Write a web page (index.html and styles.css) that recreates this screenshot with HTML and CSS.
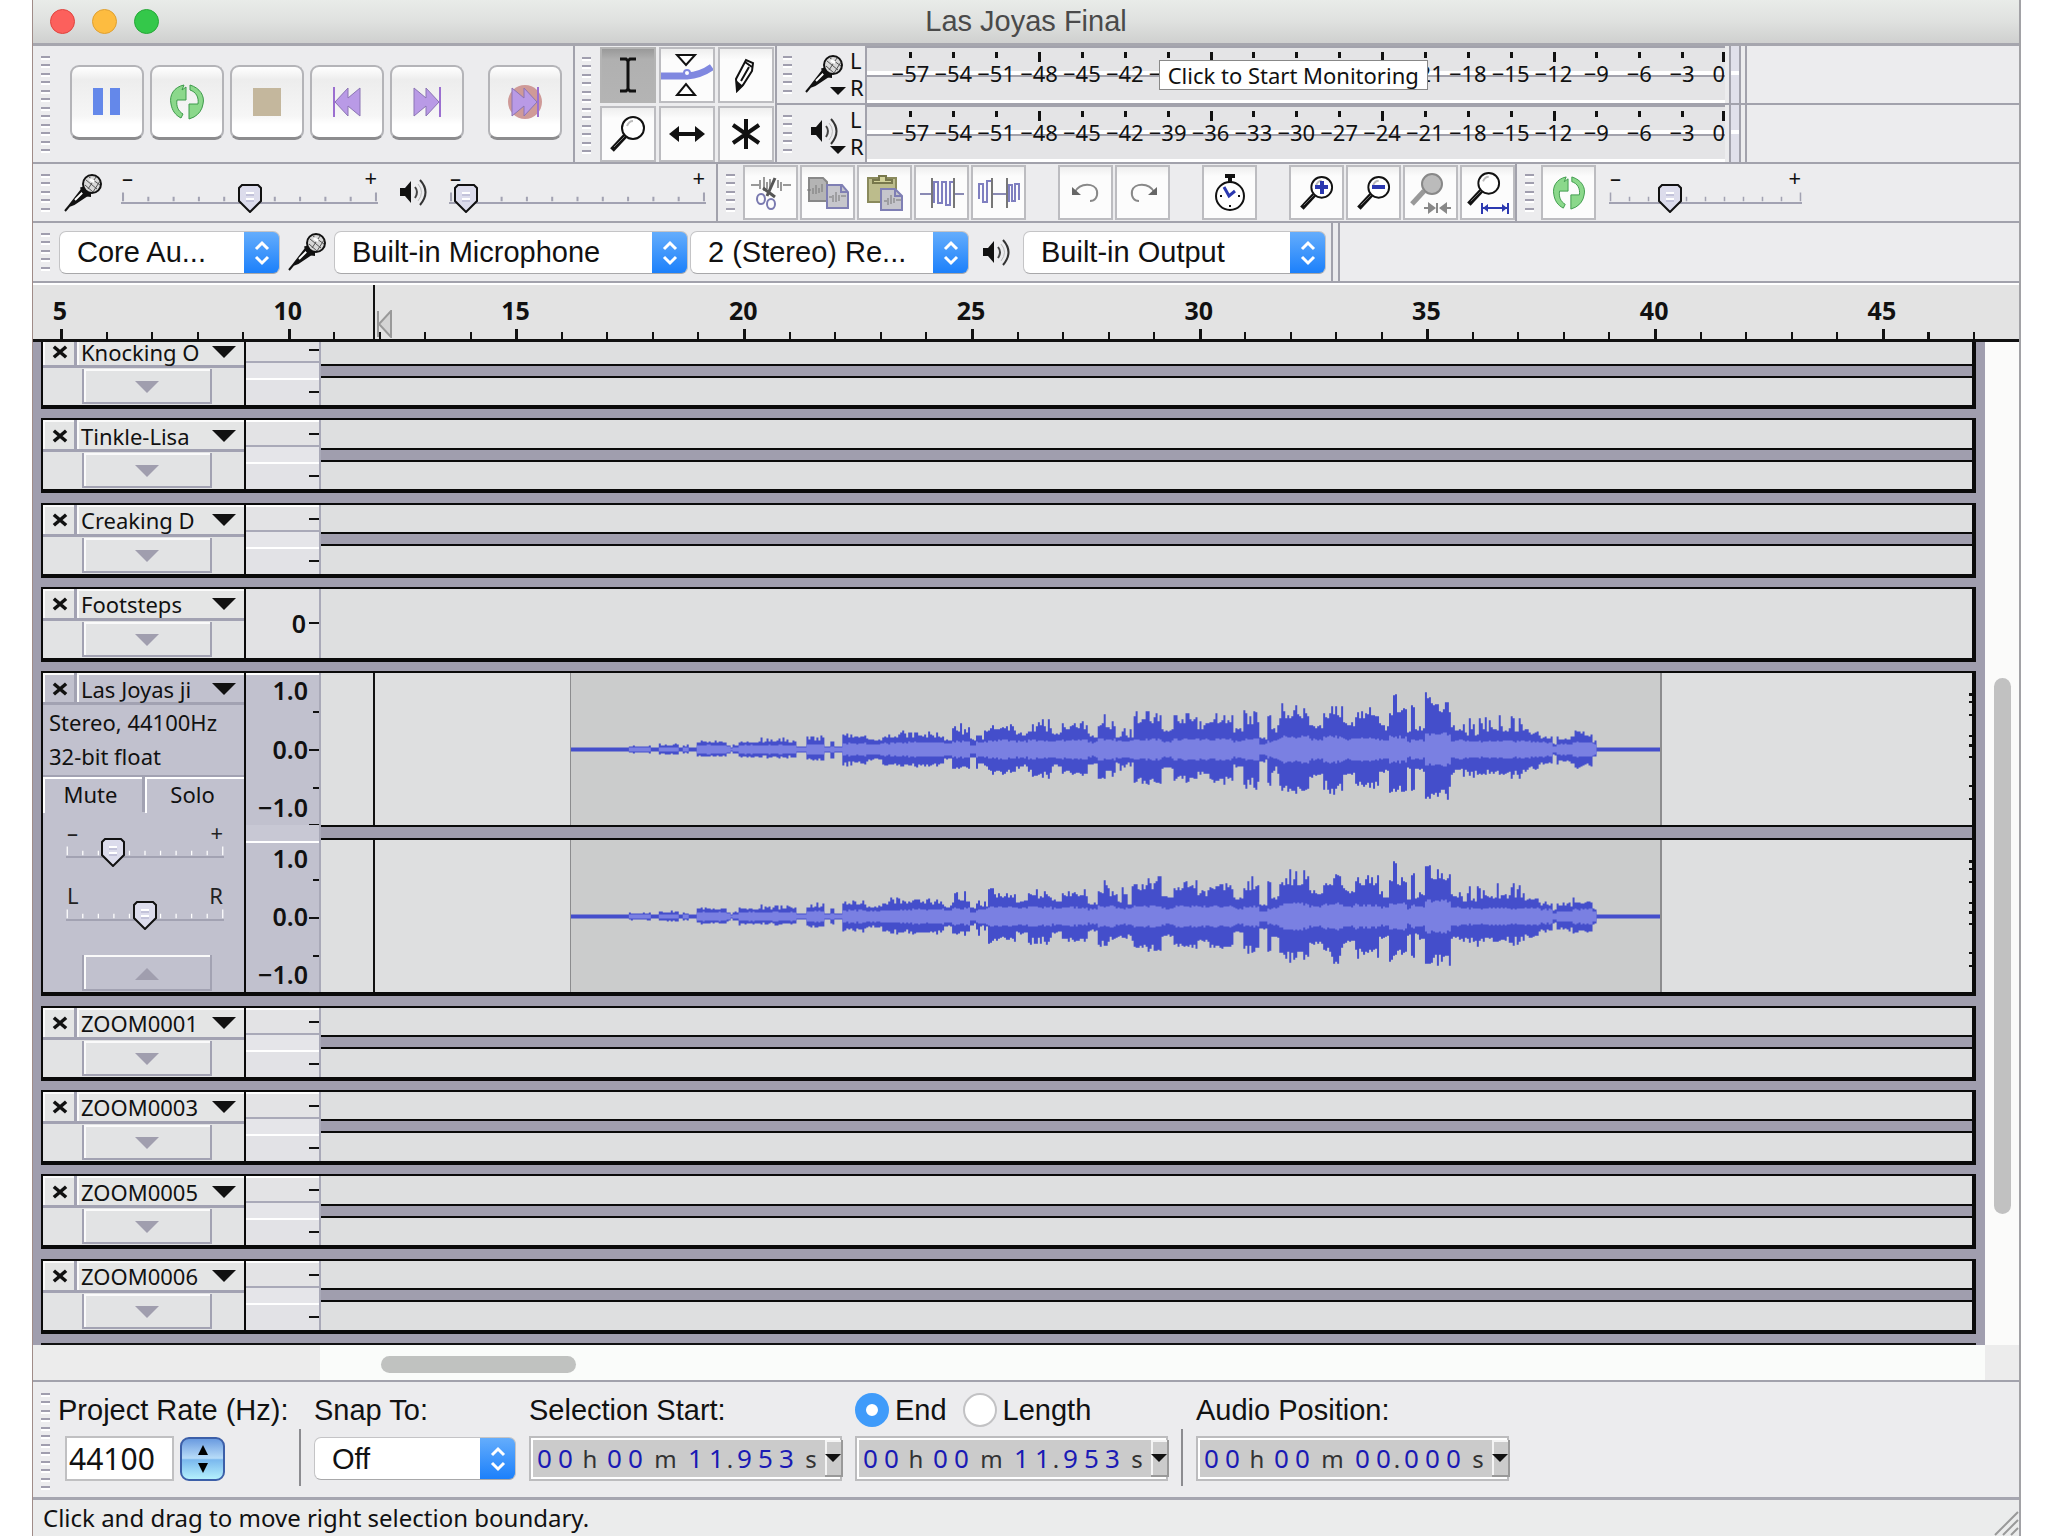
FILE: index.html
```html
<!DOCTYPE html>
<html lang="en">
<head>
<meta charset="utf-8">
<title>Las Joyas Final</title>
<link rel="stylesheet" href="styles.css">
</head>
<body>
<svg class="sprite" aria-hidden="true">
  <symbol id="mic" viewBox="0 0 40 40">
    <path d="M2 38 7 32M6 33 20 15l6 6L11 31Z" fill="#111" stroke="#111" stroke-width="2"/>
    <path d="M12 27 21 18" stroke="#fff" stroke-width="2"/>
    <path d="M19 14c1 5 4 8 9 8" stroke="#111" stroke-width="4" fill="none"/>
    <circle cx="29" cy="11" r="9" fill="#d8d8d8" stroke="#111" stroke-width="2"/>
    <path d="M23 7l11 9M26 4l11 8M22 12l8 7M25 16l8-12M30 19l7-11" stroke="#555" fill="none"/>
    <path d="M27 6l4 3" stroke="#fff" stroke-width="3"/>
  </symbol>
  <symbol id="speaker" viewBox="0 0 27 28">
    <path d="M0 10h5l6-7v22l-6-7H0Z" fill="#111"/>
    <path d="M15 9q4 5 0 11" fill="none" stroke="#444" stroke-width="2"/>
    <path d="M20 2q11 12 0 25" fill="none" stroke="#333" stroke-width="2"/>
    <path d="M18 6q7 8 0 17" fill="none" stroke="#bbb" stroke-width="1"/>
  </symbol>
  <symbol id="loop" viewBox="0 0 36 36">
    <path d="M15 1C5 3 0 11 2 20c1 6 4 11 10 14l2-4C9 27 7 22 8 16h9V3l-4 3Z" fill="#8bd88b" stroke="#3d9a4a" stroke-width="1"/>
    <path d="M21 1c10 3 15 11 13 19-1 6-4 10-9 13l-5 2V20h9c1-7-2-12-8-14Z" fill="#8bd88b" stroke="#3d9a4a" stroke-width="1"/>
  </symbol>
  <symbol id="skip" viewBox="0 0 28 34">
    <path d="M1 3 13 13V3l13 14-13 14V21L1 31Z" fill="#b99ae6" stroke="#8b74b4" stroke-width="1"/>
    <path d="M27 2v30" stroke="#9b6fd0" stroke-width="2"/>
  </symbol>
  <symbol id="lens" viewBox="0 0 36 36">
    <path d="M2 34 15 20" stroke="#111" stroke-width="5"/>
    <path d="M4 31 15 20" stroke="#777" stroke-width="1"/>
    <circle cx="23" cy="12" r="11" fill="#fff" stroke="#111" stroke-width="2"/>
    <path d="M17 10q2-5 6-5" stroke="#bbb" stroke-width="2" fill="none"/>
  </symbol>
  <symbol id="chevrons" viewBox="0 0 16 26">
    <path d="M2 9 8 3l6 6M2 17l6 6 6-6" fill="none" stroke="#fff" stroke-width="3"/>
  </symbol>
  <symbol id="down" viewBox="0 0 24 12"><path d="M0 0h24L12 12Z" fill="currentColor"/></symbol>
  <symbol id="up" viewBox="0 0 24 12"><path d="M0 12h24L12 0Z" fill="currentColor"/></symbol>
  <symbol id="cross" viewBox="0 0 16 16"><path d="M1 2 15 14M15 2 1 14" stroke="#111" stroke-width="4"/></symbol>
  <symbol id="scale" viewBox="0 0 254 16" preserveAspectRatio="none">
    <path d="M2 5v10M252 5v10M27 10v5M52 10v5M77 10v5M102 10v5M127 10v5M152 10v5M177 10v5M202 10v5M227 10v5" stroke="currentColor" stroke-width="2"/>
  </symbol>
</svg>

<main class="window">
  <header class="titlebar">
    <div class="lights"><button class="red" aria-label="Close"></button><button class="amber" aria-label="Minimise"></button><button class="green" aria-label="Zoom"></button></div>
    <h1>Las Joyas Final</h1>
  </header>

  <div class="row row-transport">
    <div class="bar transport">
      <div class="grip tall"></div>
      <div class="transport-buttons">
        <button aria-label="Pause"><svg width="30" height="30"><path d="M1 1h10v27H1ZM18 1h10v27H18Z" fill="#6488ea"/></svg></button>
        <button aria-label="Play"><svg width="36" height="36"><use href="#loop"/></svg></button>
        <button aria-label="Stop"><svg width="28" height="28"><path d="M0 0h28v28H0Z" fill="#c4b79d"/></svg></button>
        <button aria-label="Skip to Start"><svg class="flip" width="28" height="34"><use href="#skip"/></svg></button>
        <button aria-label="Skip to End"><svg width="28" height="34"><use href="#skip"/></svg></button>
        <button class="record" aria-label="Record"><svg width="36" height="36"><circle cx="18" cy="18" r="17" fill="#cf9a98"/><use href="#skip" x="4" y="1" width="28" height="34"/></svg></button>
      </div>
    </div>
    <div class="bar tools">
      <div class="grip tall"></div>
      <div class="tool-grid">
        <button class="on" aria-label="Selection"><svg width="20" height="36"><path d="M2 2h6l2 2 2-2h6M10 3v30M2 34h6l2-2 2 2h6" fill="none" stroke="#111" stroke-width="3"/></svg></button>
        <button aria-label="Envelope"><svg width="52" height="44"><path d="M0 23h26q14-1 25-9" fill="none" stroke="#8088e0" stroke-width="7"/><path d="M16 2h18L25 12ZM16 42h18L25 31Z" fill="#fff" stroke="#111" stroke-width="2"/><circle cx="26" cy="20" r="3" fill="#fff" stroke="#8088e0" stroke-width="2"/></svg></button>
        <button aria-label="Draw"><svg width="24" height="36"><path d="M3 34 2 22 12 3l7 3-1 8-9 14Z" fill="#fff" stroke="#111" stroke-width="2"/><path d="M3 34 2 23l7 6Z" fill="#111"/><path d="M11 5l7 5M7 24l8-14" stroke="#111" stroke-width="2"/></svg></button>
        <button aria-label="Zoom"><svg width="36" height="36"><use href="#lens"/></svg></button>
        <button aria-label="Time Shift"><svg width="36" height="20"><path d="M0 10 10 2v6h16V2l10 8-10 8v-6H10v6Z" fill="#111"/></svg></button>
        <button aria-label="Multi-Tool"><svg width="30" height="32"><path d="M15 1v30M2 7l26 18M28 7 2 25" stroke="#111" stroke-width="4"/></svg></button>
      </div>
    </div>
    <div class="meters">
      <div class="meter">
        <div class="grip"></div>
        <button class="meter-menu" aria-label="Recording meter"><svg width="40" height="40"><use href="#mic"/></svg><svg class="caret" width="16" height="8"><use href="#down"/></svg></button>
        <div class="lr"><span>L</span><span>R</span></div>
        <div class="meter-scale"><span>−57</span><span>−54</span><span>−51</span><span>−48</span><span>−45</span><span>−42</span><span>−39</span><span></span><span></span><span></span><span></span><span></span><span>−21</span><span>−18</span><span>−15</span><span>−12</span><span>−9</span><span>−6</span><span>−3</span><span>0</span>
          <div class="tip">Click to Start Monitoring</div></div>
        <div class="peak"></div><div class="meter-end"></div>
      </div>
      <div class="meter">
        <div class="grip"></div>
        <button class="meter-menu" aria-label="Playback meter"><svg width="27" height="28"><use href="#speaker"/></svg><svg class="caret" width="16" height="8"><use href="#down"/></svg></button>
        <div class="lr"><span>L</span><span>R</span></div>
        <div class="meter-scale"><span>−57</span><span>−54</span><span>−51</span><span>−48</span><span>−45</span><span>−42</span><span>−39</span><span>−36</span><span>−33</span><span>−30</span><span>−27</span><span>−24</span><span>−21</span><span>−18</span><span>−15</span><span>−12</span><span>−9</span><span>−6</span><span>−3</span><span>0</span></div>
        <div class="peak"></div><div class="meter-end"></div>
      </div>
    </div>
  </div>

  <div class="row row-mixer">
    <div class="bar mixer">
      <div class="grip"></div>
      <svg class="mixer-mic" width="40" height="40"><use href="#mic"/></svg>
      <div class="slider"><div class="ends"><span>–</span><span>+</span></div><svg class="scale"><use href="#scale" width="100%" height="100%"/></svg><input type="range" aria-label="Recording volume" value="50"></div>
      <svg width="27" height="28"><use href="#speaker"/></svg>
      <div class="slider"><div class="ends"><span>–</span><span>+</span></div><svg class="scale"><use href="#scale" width="100%" height="100%"/></svg><input type="range" aria-label="Playback volume" value="6"></div>
    </div>
    <div class="bar edit">
      <div class="grip"></div>
      <div class="edit-buttons">
        <button aria-label="Cut"><svg width="42" height="34"><path d="M1 9h8M33 9h8M10 4v9M14 1v14M17 6v7M20 3v10M28 4v8M31 6v9" stroke="#999" stroke-width="2"/><path d="M25 2 17 20M13 12l12 9" stroke="#555" stroke-width="3"/><ellipse cx="11" cy="23" rx="4" ry="5" fill="none" stroke="#7a7ab0" stroke-width="2"/><ellipse cx="21" cy="28" rx="4" ry="5" fill="none" stroke="#7a7ab0" stroke-width="2"/></svg></button>
        <button aria-label="Copy"><svg width="44" height="34"><path d="M3 2h14l4 4v19H3Z" fill="#b4b4b4" stroke="#888" stroke-width="2"/><path d="M1 14h4M7 12v6M10 9v9M13 12v5M16 8v8" stroke="#777" stroke-width="1"/><path d="M21 9h15l6 7v16H21Z" fill="#c6c6cc" stroke="#7f7fb4" stroke-width="2"/><path d="M35 9v7h7" fill="none" stroke="#7f7fb4" stroke-width="2"/><path d="M23 21h3M27 19v7M30 16v10M33 19v6M35 20h5" stroke="#777"/></svg></button>
        <button aria-label="Paste"><svg width="38" height="38"><path d="M2 4h28v24H2Z" fill="#bcbc8c" stroke="#8a8a5c" stroke-width="2"/><path d="M7 9v-3h6V2h7v4h6v3Z" fill="#d2d29a" stroke="#77774c" stroke-width="2"/><path d="M15 15h14l7 7v14H15Z" fill="#c6c6cc" stroke="#7f7fb4" stroke-width="2"/><path d="M29 15v7h7" fill="none" stroke="#7f7fb4" stroke-width="2"/><path d="M18 27h3M22 24v7M25 21v9M28 24v5M30 26h5" stroke="#777"/></svg></button>
        <button aria-label="Trim"><svg width="44" height="32"><path d="M0 17h12M34 17h10" stroke="#8a8ab4" stroke-width="2"/><path d="M12 1v30M34 1v30" stroke="#777" stroke-width="2"/><path d="M14 26V5h4v21h4V5h4v23h4V5h3" fill="none" stroke="#7f7fc0" stroke-width="2"/></svg></button>
        <button aria-label="Silence"><svg width="44" height="32"><path d="M16 17h15" stroke="#8a8ab4" stroke-width="2"/><path d="M15 1v30M30 1v30" stroke="#777" stroke-width="2"/><path d="M2 22V7h4v18h4V4h4M32 25V8h3v16h3V7h4v16" fill="none" stroke="#7f7fc0" stroke-width="2"/></svg></button>
        <button class="gap" aria-label="Undo"><svg width="30" height="22"><path d="M4 10C9 0 24 1 26 9c1 6-2 10-7 10" fill="none" stroke="#888" stroke-width="2"/><path d="M1 5v8h9Z" fill="#666"/></svg></button>
        <button aria-label="Redo"><svg class="flip" width="30" height="22"><path d="M4 10C9 0 24 1 26 9c1 6-2 10-7 10" fill="none" stroke="#888" stroke-width="2"/><path d="M1 5v8h9Z" fill="#666"/></svg></button>
        <button class="gap" aria-label="Sync-Lock"><svg width="32" height="38"><circle cx="16" cy="22" r="14" fill="#fff" stroke="#111" stroke-width="2"/><path d="M11 2h10M16 2v6" stroke="#111" stroke-width="4"/><path d="M10 13l5 9 6-5" fill="none" stroke="#2b38b0" stroke-width="3"/><path d="M6 22h2M24 22h2M16 31v2" stroke="#111" stroke-width="2"/></svg></button>
        <button class="gap" aria-label="Zoom In"><svg width="34" height="34"><use href="#lens"/><path d="M22 5v13M15 11h13" stroke="#2b38b0" stroke-width="4"/></svg></button>
        <button aria-label="Zoom Out"><svg width="34" height="34"><use href="#lens"/><path d="M15 11h13" stroke="#2b38b0" stroke-width="4"/></svg></button>
        <button aria-label="Fit Selection"><svg width="42" height="42"><path d="M2 32 14 19" stroke="#999" stroke-width="5"/><circle cx="22" cy="12" r="10" fill="#bbb" stroke="#888" stroke-width="2"/><path d="M14 36h8M32 36h9M27 31v10" stroke="#888" stroke-width="2"/><path d="M18 30l8 6-8 6ZM37 30l-8 6 8 6Z" fill="#888"/></svg></button>
        <button aria-label="Fit Project"><svg width="42" height="42"><use href="#lens" width="34" height="34"/><path d="M15 31v11M41 31v11M15 36h26" stroke="#2b38b0" stroke-width="2"/><path d="M16 36l5-4v8ZM40 36l-5-4v8Z" fill="#2b38b0"/></svg></button>
      </div>
    </div>
    <div class="bar speed">
      <div class="grip"></div>
      <button class="flat" aria-label="Play at Speed"><svg width="34" height="36"><use href="#loop"/></svg></button>
      <div class="slider"><div class="ends"><span>–</span><span>+</span></div><svg class="scale"><use href="#scale" width="100%" height="100%"/></svg><input type="range" aria-label="Playback speed" value="31"></div>
    </div>
  </div>

  <div class="row row-device">
    <div class="bar device">
      <div class="grip"></div>
      <div class="pick host"><select aria-label="Audio host"><option>Core Au...</option></select><svg width="16" height="26"><use href="#chevrons"/></svg></div>
      <svg width="40" height="40"><use href="#mic"/></svg>
      <div class="pick input-device"><select aria-label="Recording device"><option>Built-in Microphone</option></select><svg width="16" height="26"><use href="#chevrons"/></svg></div>
      <div class="pick channels"><select aria-label="Recording channels"><option>2 (Stereo) Re...</option></select><svg width="16" height="26"><use href="#chevrons"/></svg></div>
      <svg class="device-speaker" width="27" height="28"><use href="#speaker"/></svg>
      <div class="pick output-device"><select aria-label="Playback device"><option>Built-in Output</option></select><svg width="16" height="26"><use href="#chevrons"/></svg></div>
    </div>
    <div class="bar-end"></div>
  </div>

  <div class="ruler">
    <div class="seg"><span>5</span></div><div class="seg"><span>10</span></div><div class="seg"><span>15</span></div><div class="seg"><span>20</span></div><div class="seg"><span>25</span></div><div class="seg"><span>30</span></div><div class="seg"><span>35</span></div><div class="seg"><span>40</span></div><div class="seg short"><span>45</span></div>
    <div class="cursor"></div>
    <svg class="marker" width="16" height="28"><path d="M1 1v26M14 1v26L2 14Z" fill="#d4d4d4" stroke="#999" stroke-width="2"/></svg>
  </div>

  <div class="stage">
    <div class="tracks">
      <section class="track">
        <div class="panel"><div class="head"><button class="close" aria-label="Close track"><svg width="16" height="14"><use href="#cross"/></svg></button><button class="name">Knocking O<svg width="24" height="12"><use href="#down"/></svg></button></div><div class="fold"><button aria-label="Expand"><svg width="24" height="12"><use href="#down"/></svg></button></div></div>
        <div class="vs double"></div><div class="lanes"><div></div><div></div></div>
      </section>
      <section class="track">
        <div class="panel"><div class="head"><button class="close" aria-label="Close track"><svg width="16" height="14"><use href="#cross"/></svg></button><button class="name">Tinkle-Lisa<svg width="24" height="12"><use href="#down"/></svg></button></div><div class="fold"><button aria-label="Expand"><svg width="24" height="12"><use href="#down"/></svg></button></div></div>
        <div class="vs double"></div><div class="lanes"><div></div><div></div></div>
      </section>
      <section class="track">
        <div class="panel"><div class="head"><button class="close" aria-label="Close track"><svg width="16" height="14"><use href="#cross"/></svg></button><button class="name">Creaking D<svg width="24" height="12"><use href="#down"/></svg></button></div><div class="fold"><button aria-label="Expand"><svg width="24" height="12"><use href="#down"/></svg></button></div></div>
        <div class="vs double"></div><div class="lanes"><div></div><div></div></div>
      </section>
      <section class="track">
        <div class="panel"><div class="head"><button class="close" aria-label="Close track"><svg width="16" height="14"><use href="#cross"/></svg></button><button class="name">Footsteps<svg width="24" height="12"><use href="#down"/></svg></button></div><div class="fold"><button aria-label="Expand"><svg width="24" height="12"><use href="#down"/></svg></button></div></div>
        <div class="vs mono"><span>0</span></div><div class="lanes"><div></div></div>
      </section>
      <section class="track open">
        <div class="panel">
          <div class="head"><button class="close" aria-label="Close track"><svg width="16" height="14"><use href="#cross"/></svg></button><button class="name">Las Joyas ji<svg width="24" height="12"><use href="#down"/></svg></button></div>
          <div class="format"><span>Stereo, 44100Hz</span><span>32-bit float</span></div>
          <div class="mute-solo"><button>Mute</button><button>Solo</button></div>
          <div class="track-sliders">
            <div class="slider"><div class="ends"><span>–</span><span>+</span></div><svg class="scale"><use href="#scale" width="100%" height="100%"/></svg><input type="range" aria-label="Gain" value="29"></div>
            <div class="slider"><div class="ends"><span>L</span><span>R</span></div><svg class="scale"><use href="#scale" width="100%" height="100%"/></svg><input type="range" aria-label="Pan" value="50"></div>
          </div>
          <div class="fold"><button aria-label="Collapse"><svg width="24" height="12"><use href="#up"/></svg></button></div>
        </div>
        <div class="vs full">
          <div class="amps"><span>1.0</span><span>0.0</span><span>−1.0</span></div>
          <div class="amps"><span>1.0</span><span>0.0</span><span>−1.0</span></div>
        </div>
        <div class="lanes">
          <div class="lane"><div class="before"></div><div class="clip"><svg class="wave" viewBox="0 0 1091 151" preserveAspectRatio="none" data-seed="7"></svg></div><div class="after"></div></div>
          <div class="lane"><div class="before"></div><div class="clip"><svg class="wave" viewBox="0 0 1091 151" preserveAspectRatio="none" data-seed="23"></svg></div><div class="after"></div></div>
        </div>
      </section>
      <section class="track">
        <div class="panel"><div class="head"><button class="close" aria-label="Close track"><svg width="16" height="14"><use href="#cross"/></svg></button><button class="name">ZOOM0001<svg width="24" height="12"><use href="#down"/></svg></button></div><div class="fold"><button aria-label="Expand"><svg width="24" height="12"><use href="#down"/></svg></button></div></div>
        <div class="vs double"></div><div class="lanes"><div></div><div></div></div>
      </section>
      <section class="track">
        <div class="panel"><div class="head"><button class="close" aria-label="Close track"><svg width="16" height="14"><use href="#cross"/></svg></button><button class="name">ZOOM0003<svg width="24" height="12"><use href="#down"/></svg></button></div><div class="fold"><button aria-label="Expand"><svg width="24" height="12"><use href="#down"/></svg></button></div></div>
        <div class="vs double"></div><div class="lanes"><div></div><div></div></div>
      </section>
      <section class="track">
        <div class="panel"><div class="head"><button class="close" aria-label="Close track"><svg width="16" height="14"><use href="#cross"/></svg></button><button class="name">ZOOM0005<svg width="24" height="12"><use href="#down"/></svg></button></div><div class="fold"><button aria-label="Expand"><svg width="24" height="12"><use href="#down"/></svg></button></div></div>
        <div class="vs double"></div><div class="lanes"><div></div><div></div></div>
      </section>
      <section class="track">
        <div class="panel"><div class="head"><button class="close" aria-label="Close track"><svg width="16" height="14"><use href="#cross"/></svg></button><button class="name">ZOOM0006<svg width="24" height="12"><use href="#down"/></svg></button></div><div class="fold"><button aria-label="Expand"><svg width="24" height="12"><use href="#down"/></svg></button></div></div>
        <div class="vs double"></div><div class="lanes"><div></div><div></div></div>
      </section>
      <div class="next-track"></div>
    </div>
    <div class="vscroll"><div class="vthumb"></div></div>
  </div>
  <div class="hscroll"><div class="htrack"><div class="hthumb"></div></div></div>

  <div class="selection">
    <div class="grip tall"></div>
    <div class="field rate">
      <label for="rate">Project Rate (Hz):</label>
      <div class="controls"><input id="rate" type="text" value="44100"><button class="stepper" aria-label="Choose rate"><svg width="10" height="10"><path d="M0 10h10L5 0Z"/></svg><svg width="10" height="10"><path d="M0 0h10L5 10Z"/></svg></button></div>
    </div>
    <div class="rule"></div>
    <div class="field snap">
      <label for="snap">Snap To:</label>
      <div class="controls"><div class="pick"><select id="snap"><option>Off</option></select><svg width="16" height="26"><use href="#chevrons"/></svg></div></div>
    </div>
    <div class="field">
      <div class="caption">Selection Start:</div>
      <div class="time"><div class="digits"><b>0</b><b>0</b><i>h</i><b>0</b><b>0</b><i class="m">m</i><b>1</b><b>1</b><i class="dot">.</i><b>9</b><b>5</b><b>3</b><i>s</i></div><button aria-label="Format"><svg width="16" height="12"><use href="#down" width="16" height="12"/></svg></button></div>
    </div>
    <div class="field">
      <div class="choices"><input type="radio" name="mode" id="end" checked><label for="end">End</label><input type="radio" name="mode" id="length"><label for="length">Length</label></div>
      <div class="time"><div class="digits"><b>0</b><b>0</b><i>h</i><b>0</b><b>0</b><i class="m">m</i><b>1</b><b>1</b><i class="dot">.</i><b>9</b><b>5</b><b>3</b><i>s</i></div><button aria-label="Format"><svg width="16" height="12"><use href="#down"/></svg></button></div>
    </div>
    <div class="rule"></div>
    <div class="field">
      <div class="caption">Audio Position:</div>
      <div class="time"><div class="digits"><b>0</b><b>0</b><i>h</i><b>0</b><b>0</b><i class="m">m</i><b>0</b><b>0</b><i class="dot">.</i><b>0</b><b>0</b><b>0</b><i>s</i></div><button aria-label="Format"><svg width="16" height="12"><use href="#down"/></svg></button></div>
    </div>
  </div>
  <footer class="status"><span>Click and drag to move right selection boundary.</span>
    <svg width="26" height="26"><path d="M2 25 25 2M10 25 25 10M18 25l7-7" stroke="#999" stroke-width="2"/></svg></footer>
</main>
<script src="wave.js"></script>
</body>
</html>
```
FILE: styles.css
```css
* { box-sizing: border-box; }
body { margin: 0; background: #fff; color: #111; font-family: "Noto Sans", "Open Sans", sans-serif; font-size: 22px; }
button, input, select { font: inherit; color: inherit; margin: 0; padding: 0; border: 0; border-radius: 0; }
button { display: flex; align-items: center; justify-content: center; background: none; }
svg { display: block; flex: none; }
.sprite { position: absolute; width: 0; height: 0; }
.flip { transform: scaleX(-1); }

.window { display: flex; flex-direction: column; min-height: 100vh; margin: 0 27px 0 32px; border-left: 1px solid #a08c88; border-right: 2px solid #a2a2a6; background: #ececee; }

.titlebar { display: grid; grid-template-columns: 1fr auto 1fr; align-items: center; height: 46px; border-bottom: 3px solid #a6a6ae; background: linear-gradient(#e9ece9, #dfe1df 50%, #cfd0cf); }
.titlebar h1 { margin: 0; font: 29px "Liberation Sans", sans-serif; color: #4a4a4a; }
.lights { display: flex; gap: 17px; padding-left: 17px; }
.lights button { width: 25px; height: 25px; border-radius: 50%; border: 1px solid #e0443e; background: #fc605c; }
.lights .amber { background: #fdbc40; border-color: #dfa030; }
.lights .green { background: #34c84a; border-color: #25a837; }

.row { display: flex; border-bottom: 2px solid #a2a2ac; }
.bar { display: flex; align-items: center; border-right: 2px solid #a2a2ac; }
.grip { flex: none; width: 9px; height: 38px; margin: 0 7px 0 8px; background: repeating-linear-gradient(#a09eae 0 2px, #fff 2px 4px, transparent 4px 8px, #a09eae 8px 10px, #fff 10px 12px, transparent 12px 17px); }
.grip.tall { height: 97px; }

.row-transport { height: 118px; }
.transport { width: 542px; }
.transport-buttons { display: flex; gap: 6px; margin-left: 13px; padding-bottom: 3px; }
.transport-buttons button { width: 74px; height: 75px; border: 2px solid #b4b4b8; border-bottom: 3px solid #8c8c8e; border-radius: 9px; background: linear-gradient(#fff, #ededed 18%, #f6f6f6 70%, #fff 82%); }
.transport-buttons .record { margin-left: 18px; }
.tools { width: 202px; align-items: flex-start; }
.tools .grip { margin: 11px 9px 0 7px; }
.tool-grid { display: grid; grid-template-columns: repeat(3, 56px); gap: 3px; padding-top: 1px; }
.tool-grid button { height: 56px; border: 2px solid #bcbcc0; background: linear-gradient(#eee, #fcfcfc 20%, #fcfcfc); }
.tool-grid .on { background: linear-gradient(#999, #b0b0b0 20%, #b4b4b4); border-color: #b4b4b4; }

.meters { display: flex; flex-direction: column; flex: 1; }
.meter { display: flex; flex: 1; }
.meter:first-child { border-bottom: 2px solid #a2a2ac; }
.meter .grip { align-self: center; margin: 0 12px 0 6px; }
.meter-menu { position: relative; width: 46px; justify-content: flex-start; padding-bottom: 2px; }
.meter-menu .caret { position: absolute; right: 4px; bottom: 8px; }
.meter:nth-child(2) .meter-menu { padding: 0 0 6px 7px; }
.lr { display: flex; flex-direction: column; justify-content: space-around; width: 15px; line-height: 26px; padding-bottom: 2px; }
.meter-scale { position: relative; flex: 1; display: grid; grid-template-columns: repeat(19, 2fr) 1fr; padding-left: 22px; border-left: 2px solid #a2a2ac; background: linear-gradient(#a2a2ac 0 2px, #e4e4e6 2px 25px, #fff 25px 29px, #a2a2ac 29px 31px, #e4e4e6 31px 54px, #fff 54px); }
.meter-scale span { position: relative; text-align: center; line-height: 54px; }
.meter-scale span:last-of-type { text-align: right; }
.meter-scale span::before { content: ""; position: absolute; top: 6px; left: 50%; margin-left: -1px; width: 3px; height: 6px; background: #111; }
.meter-scale span:nth-of-type(4n)::before { height: 10px; }
.meter-scale span:last-of-type::before { left: auto; right: 0; }
.tip { position: absolute; left: 34%; top: 14px; padding: 0 8px; border: 1px solid #888; background: #fff; line-height: 28px; white-space: nowrap; }
.peak { width: 10px; margin-left: 4px; border-left: 2px solid #a2a2ac; background: linear-gradient(#e0e0ea 0 25px, #fff 25px 29px, #e0e0ea 29px); }
.meter-end { width: 8px; border: solid #a2a2ac; border-width: 0 2px; margin-right: 272px; }

.row-mixer { height: 59px; }
.mixer { width: 685px; }
.mixer-mic { margin: 0 8px 0 6px; }
.slider { position: relative; flex: none; width: 277px; color: #a2a2b2; }
.slider .ends { display: flex; justify-content: space-between; height: 12px; padding: 0 11px; line-height: 10px; color: #111; }
.slider .scale { position: absolute; left: 10px; bottom: 9px; width: calc(100% - 20px); height: 16px; border-bottom: 2px solid #a2a2b2; }
.slider input { position: relative; display: block; width: 100%; height: 29px; appearance: none; background: none; }
.slider input::-webkit-slider-thumb { appearance: none; width: 24px; height: 29px; border: 0; border-radius: 0; background: url("data:image/svg+xml,%3Csvg xmlns='http://www.w3.org/2000/svg' width='24' height='29'%3E%3Cpath d='M4 1h16l3 3v13L12 28 1 17V4Z' fill='%23dcdcec' stroke='%23111' stroke-width='2'/%3E%3Cpath d='M8 9h8M8 15h8' stroke='%23fff' stroke-width='2'/%3E%3Cpath d='M8 11h8M8 17h8' stroke='%23aaaac8' stroke-width='1'/%3E%3C/svg%3E"); }
.mixer > svg:nth-of-type(2) { margin: 0 12px 2px; }
.edit .grip { margin-right: 8px; }
.edit-buttons { display: flex; gap: 2px; }
.edit-buttons button, .flat { width: 55px; height: 55px; border: 2px solid #bcbcc0; background: linear-gradient(#eee, #fcfcfc 18%, #fcfcfc); }
.edit-buttons .gap { margin-left: 30px; }
.speed { border: 0; }
.speed .slider { width: 213px; margin-left: 3px; }

.row-device { height: 60px; font: 29px "Liberation Sans", sans-serif; }
.device { padding-right: 5px; }
.device .grip { margin-right: 9px; }
.pick { position: relative; flex: none; height: 43px; }
.pick select { width: 100%; height: 100%; padding-left: 17px; appearance: none; border: 1px solid #c4c4c6; border-bottom-color: #a8a8aa; border-radius: 7px; background: linear-gradient(#66aefc, #1a7ffb) right / 36px 100% no-repeat, #fff; background-origin: border-box; }
.pick svg { position: absolute; right: 10px; top: 9px; pointer-events: none; }
.host { width: 221px; }
.device > svg { margin: 0 7px; }
.input-device { width: 354px; }
.channels { width: 279px; margin-left: 2px; }
.device > .device-speaker { margin: 0 13px 0 14px; }
.output-device { width: 303px; }
.bar-end { width: 7px; border-right: 2px solid #a2a2ac; }

.ruler { position: relative; display: grid; grid-template-columns: repeat(8, 5fr) 2fr; height: 59px; padding: 0 46px 0 27px; border-top: 2px solid #fff; border-bottom: 3px solid #111; background: #e3e3e3; font-weight: 700; font-size: 25px; }
.seg { position: relative; display: flex; }
.seg span { width: 60px; margin-left: -30px; text-align: center; line-height: 51px; }
.seg::before { content: ""; position: absolute; left: 0; bottom: 0; width: 3px; height: 10px; background: #111; }
.seg::after { content: ""; position: absolute; inset: auto 0 0 0; height: 7px; background: repeating-linear-gradient(to right, #111 0 2px, transparent 2px 20%); }
.seg.short::after { background: repeating-linear-gradient(to right, #111 0 2px, transparent 2px 50%); border-right: 2px solid #111; right: -2px; }
.cursor { position: absolute; left: 340px; top: 0; bottom: 0; width: 2px; background: #111; }
.marker { position: absolute; left: 344px; bottom: 1px; }

.stage { display: flex; flex: 1 0 1003px; height: 1003px; overflow: hidden; }
.tracks { flex: 1; display: flex; flex-direction: column; justify-content: space-between; margin-top: -8px; padding: 0 9px 0 8px; background: #a09eae; }
.track { flex: none; display: grid; grid-template-columns: 203px 75px 1fr; height: 75px; border: solid #0a0a0a; border-width: 2px 4px 4px 2px; background: #e2e3e4; }
.next-track { height: 2px; background: #111; }
.panel { display: flex; flex-direction: column; border-right: 2px solid #0a0a0a; }
.head { display: flex; gap: 3px; height: 32px; border-bottom: 3px solid #a2a2b2; background: #a2a2b2; }
.head button { background: #e4e5e5; border: solid #fafafa; border-width: 2px 0 0 2px; }
.head .close { width: 31px; padding-left: 1px; }
.head .name { flex: 1; justify-content: space-between; padding: 0 8px 0 2px; white-space: nowrap; line-height: 26px; }
.fold { flex: 1; display: flex; justify-content: center; padding: 1px 0 1px 6px; color: #a09eae; }
.fold button { width: 130px; padding-top: 3px; border: solid #a2a2b2; border-width: 0 2px 2px; box-shadow: inset 2px 2px #fafafa; }
.vs { position: relative; border-right: 2px solid #a9a9b8; background: #e4e4e8; font-size: 25px; font-weight: 600; }
.double { background: linear-gradient(#111, #111) right 13px / 10px 2px no-repeat, linear-gradient(#111, #111) right 55px / 10px 2px no-repeat, linear-gradient(#fff 0 2px, #e3e3e5 2px 25px, #a9a9b8 25px 27px, #e5e5e9 27px 42px, #fff 42px 44px, #e2e2e6 44px); }
.mono { display: flex; align-items: center; justify-content: flex-end; padding-right: 13px; background: linear-gradient(#111, #111) right center / 10px 2px no-repeat, #e2e2e4; }
.lanes { display: flex; flex-direction: column; gap: 10px; background: #a09eae; }
.lanes > div { flex: 1; background: #dedfe0; }
.double + .lanes > div, .open .lanes > div { border: 0 solid #0a0a0a; }
.double + .lanes > div:first-child, .open .lanes > div:first-child { border-bottom-width: 2px; }
.double + .lanes > div:last-child, .open .lanes > div:last-child { border-top-width: 2px; }

.open { height: 325px; background: #c1c1ce; }
.open .head button { background: #c1c1ce; }
.format { display: flex; flex-direction: column; height: 72px; padding: 0 6px; line-height: 34px; border-bottom: 2px solid #a2a2b2; white-space: nowrap; }
.mute-solo { display: grid; grid-template-columns: 1fr 1fr; gap: 3px; height: 35px; border-bottom: 3px solid #a2a2b2; background: #a2a2b2; }
.mute-solo button { padding: 0 6px 4px 0; background: #c1c1ce; border: solid #fff; border-width: 2px 0 0 2px; }
.track-sliders { display: flex; flex-direction: column; gap: 22px; height: 142px; padding: 14px 0 0 13px; }
.track-sliders .slider { width: 178px; color: #fff; }
.track-sliders .ends { height: 12px; line-height: 12px; color: #222; }
.full { display: flex; flex-direction: column; gap: 16px; background: #c8c8d4; }
.amps { position: relative; flex: 1; display: flex; flex-direction: column; justify-content: space-between; align-items: flex-end; padding: 0 11px 3px 0; line-height: 30px; border: solid #fff; border-width: 2px 0 0; background: linear-gradient(#111, #111) right 36px / 6px 2px no-repeat, linear-gradient(#111, #111) right 74px / 10px 2px no-repeat, linear-gradient(#111, #111) right 112px / 6px 2px no-repeat, linear-gradient(#111, #111) right 149px / 10px 2px no-repeat, #c1c1ce; }
.open .lanes { position: relative; gap: 11px; }
.open .lane { display: flex; }
.before { position: relative; flex: 250; }
.before::after { content: ""; position: absolute; left: 52px; top: 0; bottom: 0; width: 2px; background: #111; }
.clip { flex: 1091; border: solid #8c8c8e; border-width: 0 2px 0 1px; background: #cbcccc; }
.after { flex: 311; background: linear-gradient(#111, #111) right 20px / 3px 3px no-repeat, linear-gradient(#111, #111) right 28px / 3px 2px no-repeat, linear-gradient(#111, #111) right 41px / 3px 2px no-repeat, linear-gradient(#111, #111) right 62px / 3px 2px no-repeat, linear-gradient(#111, #111) right 71px / 3px 3px no-repeat, linear-gradient(#111, #111) right 83px / 3px 2px no-repeat, linear-gradient(#111, #111) right 112px / 3px 2px no-repeat, linear-gradient(#111, #111) right 125px / 3px 2px no-repeat; }
.wave { width: 100%; height: 100%; }
.wave .outer { fill: #444ecb; }
.wave .inner { fill: #7a80e2; }

.vscroll { width: 34px; padding: 336px 8px 0 9px; background: #fbfbfa; }
.vthumb { height: 536px; border-radius: 9px; background: #c1c1c1; }
.hscroll { height: 35px; padding: 0 34px 0 287px; background: #ececec; }
.htrack { height: 100%; padding: 11px 0 0 61px; background: #fafcfa; }
.hthumb { width: 195px; height: 17px; border-radius: 9px; background: #c0c2c0; }

.selection { display: flex; align-items: flex-start; height: 120px; padding-top: 11px; border-top: 2px solid #a2a2ac; border-bottom: 3px solid #a6a6b0; font: 29px "Liberation Sans", sans-serif; background: #ececee; }
.selection .grip { margin-right: 8px; }
.field { flex: none; display: grid; grid-template-rows: 34px 45px; gap: 9px; align-items: center; margin-right: 13px; white-space: nowrap; }
.controls { display: flex; align-items: center; gap: 6px; }
.rate { width: 228px; }
.rate .controls { padding-left: 7px; }
.rate input { width: 109px; height: 45px; padding-left: 2px; border: 2px solid #c0c0c2; background: #fff; font: 30px "Noto Sans", sans-serif; }
.stepper { flex-direction: column; gap: 8px; width: 45px; height: 44px; border: 2px solid #3c5fa8; border-radius: 9px; background: linear-gradient(#6a9be0, #b8dcf8 48%, #7ab8ee 52%, #b4f0fc); }
.rule { align-self: flex-start; width: 2px; height: 57px; margin: 36px 13px 0 0; background: #8c8c90; }
.snap .pick { width: 202px; }
.choices { display: flex; align-items: center; }
.choices label { margin: 0 16px 0 6px; }
.choices input { appearance: none; width: 34px; height: 34px; border: 2px solid #c2c2c4; border-radius: 50%; background: #fff; }
.choices input:checked { border: 11px solid #3f9bfa; }
.time { display: flex; width: 313px; height: 45px; padding: 2px; border: 2px solid #bcbcbe; background: #fff; font: 26px "Noto Sans", sans-serif; }
.digits { flex: 1; display: flex; align-items: center; padding-left: 1px; background: #cbcbcb; line-height: 37px; }
.digits b { width: 21px; text-align: center; font-weight: 400; color: #1a1ab4; }
.digits i { width: 28px; text-align: center; font-style: normal; font-size: 24px; color: #333; }
.digits .m { width: 39px; }
.digits .dot { width: 7px; text-indent: -1px; }
.time button { width: 19px; border: solid #999; border-width: 0 2px 2px 0; box-shadow: inset 2px 2px #f4f4f4; background: #cbcbcb; }

.status { display: flex; justify-content: space-between; align-items: flex-end; height: 36px; padding-left: 10px; background: #ebecec; font-size: 24px; line-height: 36px; white-space: nowrap; }
```
FILE: wave.js
```js
// Loudness envelope of the clip: [end, up min, up max, down min, down max, rms]
const envelope = [
  [58, 2, 2, 2, 2, 0], [66, 3, 4, 3, 4, 2], [80, 3, 4, 3, 4, 2], [88, 2, 2, 2, 2, 0],
  [107, 4, 6, 4, 6, 2], [111, 2, 2, 2, 2, 0], [118, 3, 5, 3, 5, 2], [126, 2, 2, 2, 2, 0],
  [155, 7, 9, 6, 8, 4], [160, 4, 5, 4, 5, 3], [162, 2, 2, 2, 2, 1], [168, 4, 5, 4, 5, 2],
  [189, 7, 10, 7, 9, 4], [225, 7, 12, 6, 10, 4], [236, 3, 3, 3, 3, 2], [253, 9, 14, 9, 12, 5],
  [259, 3, 3, 3, 3, 2], [264, 8, 8, 7, 11, 3], [272, 3, 3, 3, 3, 2], [296, 12, 16, 12, 17, 6],
  [311, 9, 11, 9, 13, 5], [338, 12, 19, 13, 19, 6], [373, 12, 19, 14, 19, 7], [382, 9, 11, 9, 11, 6],
  [399, 14, 26, 14, 22, 8], [405, 8, 11, 7, 10, 4], [418, 10, 19, 9, 23, 7], [445, 19, 28, 20, 28, 9],
  [458, 14, 17, 14, 20, 8], [482, 18, 30, 19, 34, 9], [491, 15, 18, 15, 19, 8], [517, 20, 28, 21, 28, 9],
  [528, 12, 17, 13, 17, 7], [533, 23, 26, 24, 34, 10], [536, 34, 38, 28, 32, 10], [545, 20, 33, 20, 31, 10], [564, 12, 30, 13, 30, 8], [592, 26, 40, 28, 38, 10],
  [604, 18, 22, 17, 22, 8], [627, 26, 37, 26, 34, 10], [639, 20, 28, 22, 27, 10], [663, 26, 38, 27, 37, 10],
  [673, 17, 22, 15, 20, 8], [690, 25, 40, 28, 43, 10], [697, 10, 13, 10, 15, 5], [701, 33, 36, 33, 38, 8],
  [710, 17, 24, 17, 28, 9], [739, 31, 47, 35, 48, 12], [753, 21, 27, 24, 30, 10], [773, 31, 47, 31, 53, 12],
  [785, 23, 29, 23, 28, 10], [809, 31, 44, 31, 45, 11], [819, 19, 26, 19, 24, 9], [824, 34, 38, 38, 49, 12], [828, 53, 56, 38, 43, 12], [837, 31, 49, 33, 47, 12],
  [842, 17, 19, 18, 22, 8], [846, 40, 45, 38, 43, 11], [856, 18, 25, 17, 26, 9], [861, 50, 58, 46, 53, 15], [882, 36, 48, 36, 53, 15],
  [894, 19, 26, 19, 28, 9], [909, 14, 31, 18, 34, 8], [956, 18, 35, 20, 31, 8], [970, 15, 20, 17, 23, 8],
  [983, 11, 16, 13, 18, 7], [988, 5, 8, 5, 8, 3], [1004, 10, 14, 11, 16, 5], [1024, 13, 20, 14, 20, 7],
  [1028, 7, 9, 6, 8, 5], [1091, 2, 2, 2, 2, 0]
];
const middle = 76;

function bars(side) {
  return side.map(([x, up, down]) => `M${x} ${middle - up}h2v${up + down}h-2Z`).join("");
}

document.querySelectorAll(".wave").forEach(svg => {
  let seed = Number(svg.dataset.seed);
  const random = () => (seed = (seed * 16807) % 2147483647) / 2147483647;
  const outer = [], inner = [];
  let part = 0;
  for (let x = 0; x < 1091; x += 2) {
    while (envelope[part][0] <= x && part < envelope.length - 1) part++;
    const [, upMin, upMax, downMin, downMax, rms] = envelope[part];
    const loud = random() ** 2;
    outer.push([x, Math.round(upMin + (upMax - upMin) * loud), Math.round(downMin + (downMax - downMin) * (loud + random() ** 2) / 2)]);
    if (rms) {
      const r = Math.round(rms * (0.9 + random() * 0.25));
      inner.push([x, r, r]);
    }
  }
  svg.innerHTML = `<path class="outer" d="${bars(outer)}"/><path class="inner" d="${bars(inner)}"/>`;
});
```
